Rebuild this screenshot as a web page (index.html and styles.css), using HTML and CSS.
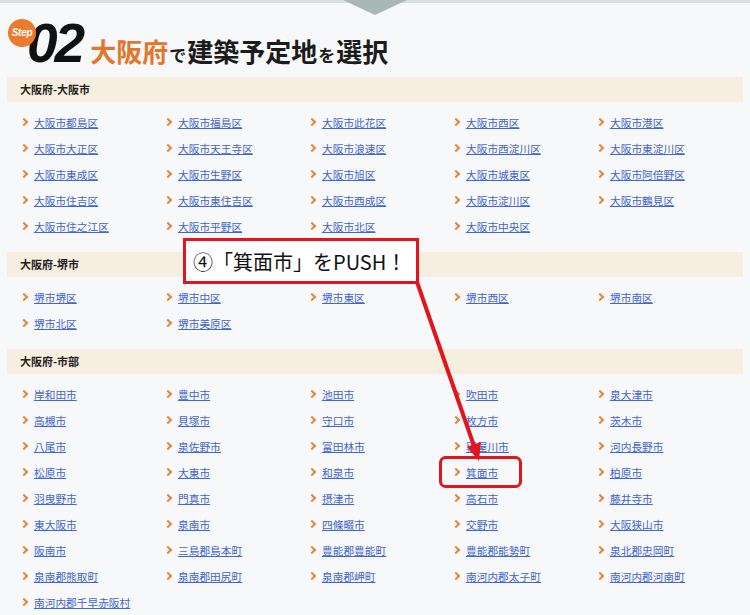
FILE: index.html
```html
<!DOCTYPE html>
<html lang="ja">
<head>
    <meta charset="UTF-8">
    <meta name="viewport" content="width=device-width, initial-scale=1.0">
    <title>Step02 大阪府で建築予定地を選択</title>
    <link rel="stylesheet" href="styles.css">
</head>
<body>
    <div class="page">
        <div class="topbar"></div>

        <div class="wrap">
            <h1 class="title">
                <span class="step-badge">Step</span>
                <span class="num">02</span>
                <span class="pref">大阪府</span><span class="small">で</span>建築予定地<span class="small">を</span>選択
            </h1>

            <section class="area">
                <h2 class="area-head">大阪府-大阪市</h2>
                <ul class="area-list">
                    <li><a href="#">大阪市都島区</a></li>
                    <li><a href="#">大阪市福島区</a></li>
                    <li><a href="#">大阪市此花区</a></li>
                    <li><a href="#">大阪市西区</a></li>
                    <li><a href="#">大阪市港区</a></li>
                    <li><a href="#">大阪市大正区</a></li>
                    <li><a href="#">大阪市天王寺区</a></li>
                    <li><a href="#">大阪市浪速区</a></li>
                    <li><a href="#">大阪市西淀川区</a></li>
                    <li><a href="#">大阪市東淀川区</a></li>
                    <li><a href="#">大阪市東成区</a></li>
                    <li><a href="#">大阪市生野区</a></li>
                    <li><a href="#">大阪市旭区</a></li>
                    <li><a href="#">大阪市城東区</a></li>
                    <li><a href="#">大阪市阿倍野区</a></li>
                    <li><a href="#">大阪市住吉区</a></li>
                    <li><a href="#">大阪市東住吉区</a></li>
                    <li><a href="#">大阪市西成区</a></li>
                    <li><a href="#">大阪市淀川区</a></li>
                    <li><a href="#">大阪市鶴見区</a></li>
                    <li><a href="#">大阪市住之江区</a></li>
                    <li><a href="#">大阪市平野区</a></li>
                    <li><a href="#">大阪市北区</a></li>
                    <li><a href="#">大阪市中央区</a></li>
                </ul>
            </section>

            <section class="area">
                <h2 class="area-head">大阪府-堺市</h2>
                <ul class="area-list">
                    <li><a href="#">堺市堺区</a></li>
                    <li><a href="#">堺市中区</a></li>
                    <li><a href="#">堺市東区</a></li>
                    <li><a href="#">堺市西区</a></li>
                    <li><a href="#">堺市南区</a></li>
                    <li><a href="#">堺市北区</a></li>
                    <li><a href="#">堺市美原区</a></li>
                </ul>
            </section>

            <section class="area">
                <h2 class="area-head">大阪府-市部</h2>
                <ul class="area-list">
                    <li><a href="#">岸和田市</a></li>
                    <li><a href="#">豊中市</a></li>
                    <li><a href="#">池田市</a></li>
                    <li><a href="#">吹田市</a></li>
                    <li><a href="#">泉大津市</a></li>
                    <li><a href="#">高槻市</a></li>
                    <li><a href="#">貝塚市</a></li>
                    <li><a href="#">守口市</a></li>
                    <li><a href="#">枚方市</a></li>
                    <li><a href="#">茨木市</a></li>
                    <li><a href="#">八尾市</a></li>
                    <li><a href="#">泉佐野市</a></li>
                    <li><a href="#">富田林市</a></li>
                    <li><a href="#">寝屋川市</a></li>
                    <li><a href="#">河内長野市</a></li>
                    <li><a href="#">松原市</a></li>
                    <li><a href="#">大東市</a></li>
                    <li><a href="#">和泉市</a></li>
                    <li><a href="#">箕面市</a></li>
                    <li><a href="#">柏原市</a></li>
                    <li><a href="#">羽曳野市</a></li>
                    <li><a href="#">門真市</a></li>
                    <li><a href="#">摂津市</a></li>
                    <li><a href="#">高石市</a></li>
                    <li><a href="#">藤井寺市</a></li>
                    <li><a href="#">東大阪市</a></li>
                    <li><a href="#">泉南市</a></li>
                    <li><a href="#">四條畷市</a></li>
                    <li><a href="#">交野市</a></li>
                    <li><a href="#">大阪狭山市</a></li>
                    <li><a href="#">阪南市</a></li>
                    <li><a href="#">三島郡島本町</a></li>
                    <li><a href="#">豊能郡豊能町</a></li>
                    <li><a href="#">豊能郡能勢町</a></li>
                    <li><a href="#">泉北郡忠岡町</a></li>
                    <li><a href="#">泉南郡熊取町</a></li>
                    <li><a href="#">泉南郡田尻町</a></li>
                    <li><a href="#">泉南郡岬町</a></li>
                    <li><a href="#">南河内郡太子町</a></li>
                    <li><a href="#">南河内郡河南町</a></li>
                    <li><a href="#">南河内郡千早赤阪村</a></li>
                </ul>
            </section>
        </div>

        <!-- 注釈 -->
        <div class="callout">④「箕面市」をPUSH！</div>
        <svg class="marks" width="750" height="615" viewBox="0 0 750 615">
            <line x1="417" y1="282" x2="474" y2="446" stroke="#e3141c" stroke-width="4"/>
            <polygon points="479,461 481,442 467,447" fill="#e3141c"/>
            <rect x="440.5" y="457.5" width="80" height="29" rx="5" fill="none" stroke="#e3141c" stroke-width="3"/>
        </svg>
    </div>
</body>
</html>
```

FILE: styles.css
```css
* {
    margin: 0;
    padding: 0;
    box-sizing: border-box;
}

body {
    font-family: "Noto Sans CJK JP", "Noto Sans", sans-serif;
    background: #f6f8fa;
    color: #222;
}

.page {
    position: relative;
    width: 750px;
    height: 615px;
    overflow: hidden;
}

.topbar {
    position: relative;
    height: 3px;
    background: #dcdfe0;
}

.topbar::after {
    content: "";
    position: absolute;
    left: 343px;
    top: 0;
    border-left: 32px solid transparent;
    border-right: 32px solid transparent;
    border-top: 15px solid #a9b8b5;
}

.wrap {
    padding: 0 7px;
}

.title {
    position: relative;
    height: 74px;
    padding-top: 13px;
    display: flex;
    align-items: baseline;
    font-size: 26px;
    font-weight: 700;
    color: #1c1c1c;
    white-space: nowrap;
}

.step-badge {
    position: absolute;
    left: 1px;
    top: 16px;
    z-index: 1;
    width: 28px;
    height: 28px;
    border-radius: 50%;
    background: #ea7a2e;
    color: #fff;
    font-family: "Liberation Sans", sans-serif;
    font-size: 10px;
    font-style: italic;
    font-weight: 700;
    line-height: 28px;
    text-align: center;
    letter-spacing: -0.3px;
}

.num {
    margin-left: 20px;
    margin-right: 8px;
    font-family: "Liberation Sans", sans-serif;
    font-size: 55px;
    font-style: italic;
    font-weight: 700;
    line-height: 1;
    letter-spacing: -3px;
    color: #111;
}

.pref {
    color: #e2762b;
}

.small {
    font-size: 17px;
    margin: 0 1px;
}

.area-head {
    height: 25px;
    line-height: 25px;
    padding-left: 13px;
    background: #f6eedf;
    font-size: 11px;
    font-weight: 700;
    color: #222;
}

.area-list {
    list-style: none;
    display: grid;
    grid-template-columns: repeat(5, 144px);
    grid-auto-rows: 26px;
    padding: 7px 0 13px 14px;
}

.area-list li {
    display: flex;
    align-items: center;
    gap: 7px;
}

.area-list li::before {
    content: "";
    width: 4px;
    height: 4px;
    border-top: 2px solid #e28a3a;
    border-right: 2px solid #e28a3a;
    transform: rotate(45deg);
}

.area-list a {
    font-size: 10.7px;
    color: #4465cc;
    text-decoration: underline;
}

.callout {
    position: absolute;
    left: 183px;
    top: 238px;
    width: 236px;
    height: 46px;
    display: flex;
    align-items: center;
    padding-left: 7px;
    border: 3px solid #e3141c;
    background: #fff;
    font-size: 20px;
    color: #111;
    white-space: nowrap;
}

.marks {
    position: absolute;
    left: 0;
    top: 0;
    pointer-events: none;
}
```
